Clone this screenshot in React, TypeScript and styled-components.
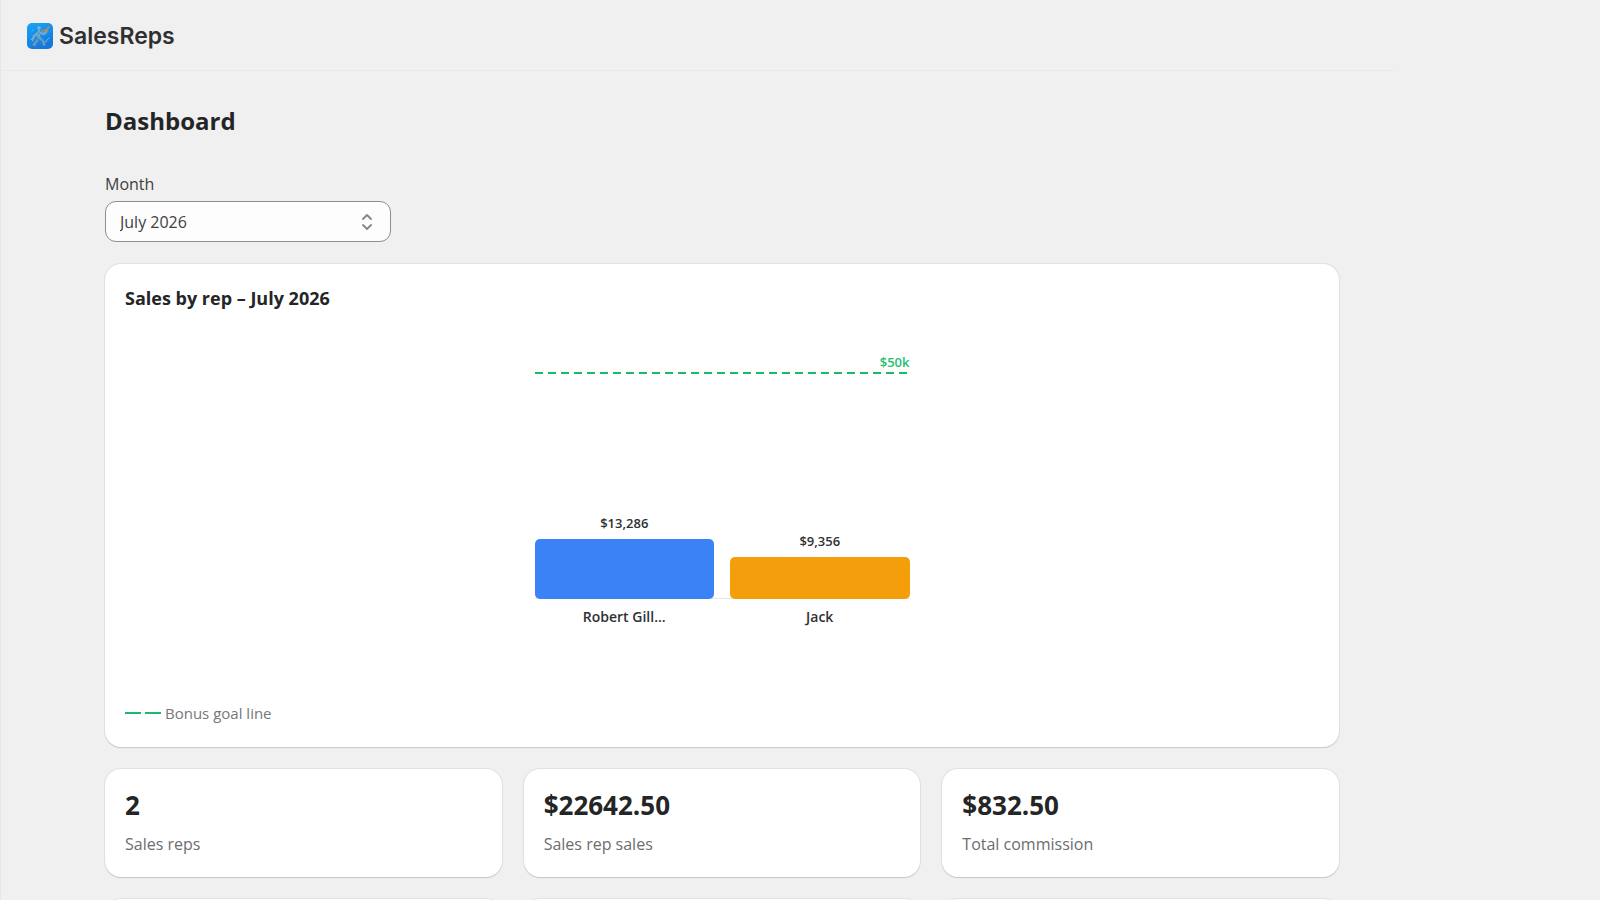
import React from "react";
import styled, { createGlobalStyle } from "styled-components";

const GlobalStyle = createGlobalStyle`
  *, *::before, *::after { box-sizing: border-box; }
  body {
    margin: 0;
    background: #f0f0f0;
    color: #242526;
    font-family: "Open Sans", "Noto Sans", sans-serif;
    font-size: 16px;
    line-height: 24px;
  }
  h1, h2, p, dl, dt, dd, figure { margin: 0; }
`;

const Page = styled.div`
  height: 100vh;
  padding-right: 206px;
  border-left: 1px solid #e6e6e6;
  overflow: hidden;
`;

const Header = styled.header`
  display: flex;
  align-items: center;
  gap: 6px;
  height: 71px;
  padding: 2px 26px 0;
  border-bottom: 1px solid #e8e8e8;
`;

const Brand = styled.span`
  font-family: Inter, sans-serif;
  font-size: 23px;
  font-weight: 600;
  line-height: 30px;
  color: #303032;
`;

const Main = styled.main`
  display: flex;
  flex-direction: column;
  gap: 22px;
  padding: 34px 55px 22px 104px;
`;

const Title = styled.h1`
  font-size: 24px;
  font-weight: 700;
  line-height: 32px;
`;

const Field = styled.div`
  display: flex;
  flex-direction: column;
  gap: 5px;
  width: 286px;
  margin-top: 13px;
`;

const Label = styled.label`
  color: #3f4042;
`;

const SelectBox = styled.div`
  display: grid;
  align-items: center;
  > * { grid-area: 1 / 1; }
  > svg { justify-self: end; margin-right: 16px; pointer-events: none; }
`;

const Select = styled.select`
  appearance: none;
  width: 100%;
  height: 41px;
  padding: 1px 40px 0 14px;
  border: 1px solid #8f8f8f;
  border-radius: 11px;
  background: #fdfdfd;
  color: #3f4042;
  font: inherit;
`;

const Card = styled.section`
  padding: 20px 20px 22px;
  border-radius: 16px;
  background: #fff;
  box-shadow: 0 1px 1px #c8c8c8, 0 0 0 1px #e2e2e2;
`;

const CardTitle = styled.h2`
  font-size: 18px;
  font-weight: 700;
  line-height: 28px;
`;

const Chart = styled.figure`
  display: flex;
  flex-direction: column;
  width: 375px;
  margin: 40px auto 74px;
  font-size: 13px;
  font-weight: 600;
  line-height: 20px;
  color: #303133;
`;

const GoalLabel = styled.span`
  align-self: flex-end;
  color: #1fc071;
`;

const Bars = styled.div`
  display: grid;
  grid-template-columns: 1fr 1fr;
  column-gap: 16px;
  align-items: end;
  height: 225px;
  border-bottom: 1px solid #e6e6e6;
`;

const BarColumn = styled.div`
  display: flex;
  flex-direction: column;
  align-items: center;
  gap: 6px;
  margin-bottom: -1px;
`;

const Bar = styled.div<{ $color: string }>`
  width: 100%;
  border-radius: 5px;
  background: ${(p) => p.$color};
`;

const Names = styled.div`
  display: grid;
  grid-template-columns: 1fr 1fr;
  column-gap: 16px;
  padding-top: 8px;
  font-size: 14px;
  text-align: center;
`;

const Legend = styled.p`
  display: flex;
  align-items: center;
  gap: 4px;
  font-size: 15px;
  color: #76777a;
`;

const Stats = styled.dl`
  display: grid;
  grid-template-columns: repeat(3, 1fr);
  gap: 22px;
`;

const Stat = styled.div`
  display: flex;
  flex-direction: column-reverse;
  justify-content: flex-end;
  gap: 11px;
  height: 108px;
  padding: 20px;
  border-radius: 16px;
  background: #fff;
  box-shadow: 0 1px 1px #c8c8c8, 0 0 0 1px #e2e2e2;
`;

const StatLabel = styled.dt`
  color: #6c6d70;
`;

const StatValue = styled.dd`
  font-size: 26px;
  font-weight: 700;
  line-height: 32px;
`;

const EmptyStats = styled.div`
  display: grid;
  grid-template-columns: repeat(3, 1fr);
  gap: 22px;
`;

const GOAL = 50000;
const PLOT_HEIGHT = 226;

const reps = [
  { name: "Robert Gill...", total: 13286, color: "#3b82f6" },
  { name: "Jack", total: 9356, color: "#f59e0b" },
];

const stats = [
  { label: "Sales reps", value: "2" },
  { label: "Sales rep sales", value: "$22642.50" },
  { label: "Total commission", value: "$832.50" },
];

function Logo() {
  return (
    <svg width="26" height="26" viewBox="0 0 26 26" aria-hidden="true">
      <defs>
        <linearGradient id="sky" x1="0" y1="0" x2="0.4" y2="1">
          <stop offset="0" stopColor="#16a6f5" />
          <stop offset="1" stopColor="#1478dc" />
        </linearGradient>
      </defs>
      <rect width="26" height="26" rx="5" fill="url(#sky)" />
      <g fill="none" strokeLinecap="round" strokeLinejoin="round">
        <path d="M12 8 11 14 14 16M11 10 7 13 6 16M13 10 17 11 19 9" stroke="#6aa9d2" strokeWidth="2.6" />
        <path d="M11 15 10 18 7 21M14 16 16 18 17 21" stroke="#5f9cc6" strokeWidth="2.4" />
        <circle cx="12" cy="5" r="1.7" fill="#82b8d6" stroke="#5fa3d0" />
        <path d="M15 8 19 7 22 4M19 7 21 8" stroke="#b98b62" strokeWidth="1.5" />
        <path d="M6 22H9M16 22H18" stroke="#b59079" strokeWidth="1.2" />
        <path d="M4 16 6 18M20 17 22 15M18 19 20 18M10 11 13 13M5 8 6 7" stroke="#8cc8ee" strokeWidth="0.8" />
        <path d="M12 10 11 12M9 15 12 17M14 12 16 14" stroke="#3b78a8" strokeWidth="0.8" />
      </g>
    </svg>
  );
}

function SelectArrows() {
  return (
    <svg width="16" height="18" viewBox="0 0 16 18" fill="none" stroke="#858585" strokeWidth="1.8" strokeLinecap="round" strokeLinejoin="round" aria-hidden="true">
      <path d="M4 6 8 2 12 6M4 12 8 16 12 12" />
    </svg>
  );
}

export default function App() {
  return (
    <Page>
      <GlobalStyle />
      <Header>
        <Logo />
        <Brand>SalesReps</Brand>
      </Header>
      <Main>
        <Title>Dashboard</Title>
        <Field>
          <Label htmlFor="month">Month</Label>
          <SelectBox>
            <Select id="month" defaultValue="2026-07">
              <option value="2026-07">July 2026</option>
            </Select>
            <SelectArrows />
          </SelectBox>
        </Field>
        <Card>
          <CardTitle>Sales by rep – July 2026</CardTitle>
          <Chart>
            <GoalLabel>$50k</GoalLabel>
            <svg width="100%" height="2" aria-hidden="true">
              <line x1="0" y1="1" x2="100%" y2="1" stroke="#18bb69" strokeWidth="2" strokeDasharray="8 5" />
            </svg>
            <Bars>
              {reps.map((r) => (
                <BarColumn key={r.name}>
                  <span>${r.total.toLocaleString("en-US")}</span>
                  <Bar $color={r.color} style={{ height: Math.round((r.total / GOAL) * PLOT_HEIGHT) }} />
                </BarColumn>
              ))}
            </Bars>
            <Names>
              {reps.map((r) => (
                <span key={r.name}>{r.name}</span>
              ))}
            </Names>
          </Chart>
          <Legend>
            <svg width="36" height="2" aria-hidden="true">
              <path d="M0 1H16M20 1H36" stroke="#18bb69" strokeWidth="2" />
            </svg>
            Bonus goal line
          </Legend>
        </Card>
        <Stats>
          {stats.map((s) => (
            <Stat key={s.label}>
              <StatLabel>{s.label}</StatLabel>
              <StatValue>{s.value}</StatValue>
            </Stat>
          ))}
        </Stats>
        <EmptyStats>
          <Stat />
          <Stat />
          <Stat />
        </EmptyStats>
      </Main>
    </Page>
  );
}
